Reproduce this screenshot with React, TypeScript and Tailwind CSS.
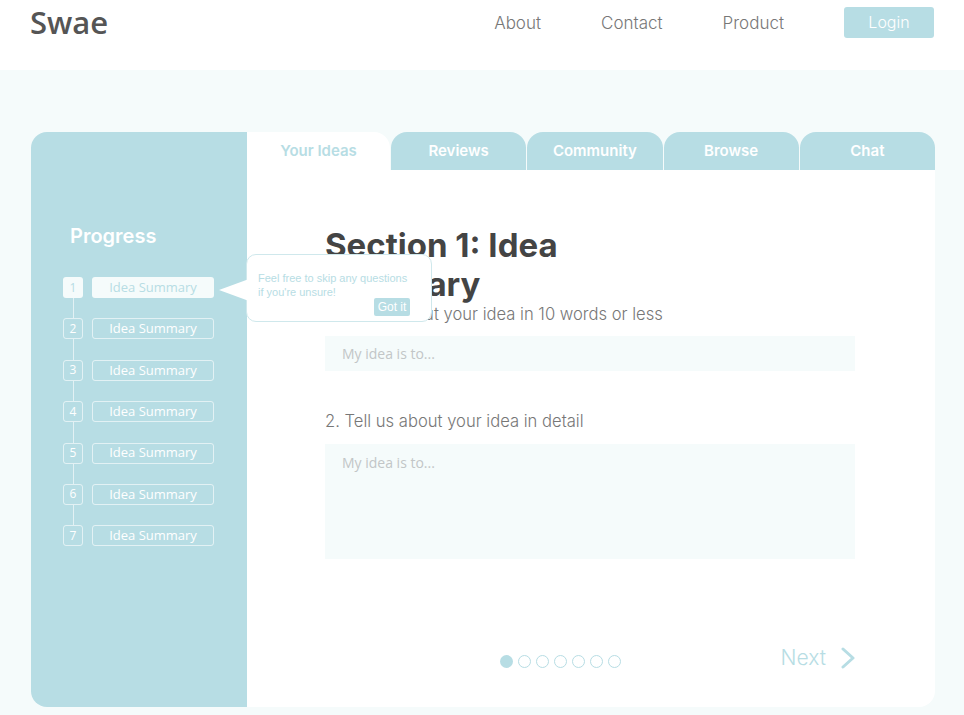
const steps = [1, 2, 3, 4, 5, 6, 7];
const tabs = ['Reviews', 'Community', 'Browse', 'Chat'];

export default function App() {
  return (
    <div className="min-h-screen bg-[#f5fbfb]" style={{ fontFamily: 'Inter, "Open Sans", sans-serif' }}>
      {/* top bar */}
      <header className="h-[70px] bg-white">
        <div className="flex h-[44px] items-center px-[30px]">
          <div className="text-[31px] font-semibold text-[#555] font-['Open_Sans',sans-serif] leading-none">Swae</div>
          <nav className="ml-auto flex items-center gap-[60px] text-[17px] font-light text-[#777]">
            <a className="mt-[3px]">About</a>
            <a className="mt-[3px]">Contact</a>
            <a className="mt-[3px]">Product</a>
            <button className="h-[31px] w-[90px] rounded-[3px] bg-[#b7dde4] text-[16px] font-light text-white">Login</button>
          </nav>
        </div>
      </header>

      <main className="px-[31px] pt-[62px] pb-[8px] pr-[29px]">
        <div className="relative flex h-[575px]">
          {/* progress sidebar */}
          <aside className="w-[216px] rounded-l-2xl bg-[#b7dde4] pt-[90px]">
            <h2 className="pl-[39px] text-[20px] font-semibold leading-[28px] text-white">Progress</h2>
            <div className="mt-[27px] pl-[32px] font-['Open_Sans',sans-serif]">
              {steps.map((n) => (
                <div key={n}>
                  {n > 1 && <div className="ml-[10px] h-[20.4px] w-px bg-white/60" />}
                  <div className="flex items-center gap-[9px]">
                    <div
                      className={
                        n === 1
                          ? 'flex h-[21px] w-[20px] items-center justify-center rounded-[3px] bg-[#f5fbfb] text-[12px] text-[#b7dde4]'
                          : 'flex h-[21px] w-[20px] items-center justify-center rounded-[3px] border border-white/60 text-[12px] text-white'
                      }
                    >
                      {n}
                    </div>
                    <div
                      className={
                        n === 1
                          ? 'flex h-[21px] w-[122px] items-center justify-center rounded-[3px] bg-[#f5fbfb] text-[13px] text-[#b7dde4]'
                          : 'flex h-[21px] w-[122px] items-center justify-center rounded-[3px] border border-white/60 text-[13px] text-white'
                      }
                    >
                      Idea Summary
                    </div>
                  </div>
                </div>
              ))}
            </div>
          </aside>

          <section className="flex flex-1 flex-col">
            {/* tabs */}
            <div className="flex h-[38px] gap-px">
              <div className="flex w-[143px] items-center justify-center rounded-tr-2xl bg-white pt-px text-[15px] font-semibold text-[#b7dde4]">
                Your Ideas
              </div>
              {tabs.map((t) => (
                <div key={t} className="flex flex-1 items-center justify-center rounded-t-2xl bg-[#b7dde4] pt-px text-[15px] font-semibold text-white">
                  {t}
                </div>
              ))}
            </div>

            {/* form */}
            <div className="flex flex-1 flex-col rounded-br-2xl bg-white pl-[78px] pr-[80px] pt-[56px] pb-[37px]">
              <h1 className="w-[300px] text-[33px] font-bold leading-[39px] text-[#444]">Section 1: Idea Summary</h1>
              <label className="text-[16.6px] font-light leading-[20px] text-[#777]">1. Tell us about your idea in 10 words or less</label>
              <div className="mt-[12px] flex h-[35px] items-center bg-[#f5fbfb] pl-[17px] font-['Open_Sans',sans-serif] text-[14px] text-[#c2c6c7]">
                My idea is to...
              </div>
              <label className="mt-[40px] text-[16.6px] font-light leading-[20px] text-[#777]">2. Tell us about your idea in detail</label>
              <div className="mt-[13px] h-[115px] bg-[#f5fbfb] pl-[17px] pt-[8px] font-['Open_Sans',sans-serif] text-[14px] text-[#c2c6c7]">
                My idea is to...
              </div>

              <div className="mt-auto flex h-[24px] items-center">
                <div className="ml-[175px] mt-[6px] flex gap-[5px]">
                  {steps.map((n) => (
                    <span
                      key={n}
                      className={
                        n === 1
                          ? 'h-[13px] w-[13px] rounded-full bg-[#b7dde4]'
                          : 'h-[13px] w-[13px] rounded-full border border-[#b7dde4]'
                      }
                    />
                  ))}
                </div>
                <div className="ml-auto flex items-center gap-[15px] text-[21px] font-light text-[#b7dde4]">
                  <span>Next</span>
                  <svg width="14" height="22" viewBox="0 0 14 22" fill="none" stroke="#b7dde4" strokeWidth="3" strokeLinecap="round" strokeLinejoin="round">
                    <polyline points="2,2 12,11 2,20" />
                  </svg>
                </div>
              </div>
            </div>
          </section>

          {/* tooltip */}
          <div className="absolute left-[215px] top-[122px] h-[68px] w-[186px] rounded-[10px] border border-[#cfe8ec] bg-white px-[11px] pt-[16px] font-['Liberation_Sans',Arial,sans-serif] text-[11px] leading-[14px] text-[#b7dde4]">
            <svg className="absolute left-[-28px] top-[24px]" width="30" height="22" viewBox="0 0 30 22">
              <polygon points="0,11 30,0 30,22" fill="white" />
            </svg>
            <p>Feel free to skip any questions</p>
            <p>if you're unsure!</p>
            <button className="absolute left-[127px] top-[43px] h-[18px] w-[36px] rounded-[2px] bg-[#b7dde4] text-[12px] text-white">Got it</button>
          </div>
        </div>
      </main>
    </div>
  );
}
